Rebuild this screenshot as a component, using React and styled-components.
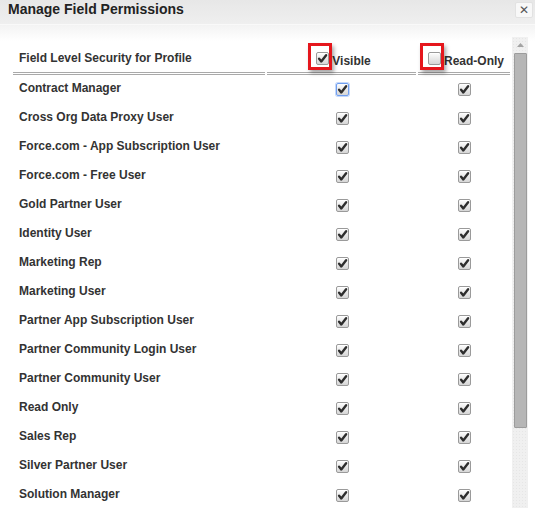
import React from "react";
import styled, { createGlobalStyle } from "styled-components";

const GlobalStyle = createGlobalStyle`
  body {
    margin: 0;
    background: #fff;
  }
`;

const Dialog = styled.div`
  width: 535px;
  height: 508px;
  display: flex;
  flex-direction: column;
  overflow: hidden;
  background: #fff;
  font-family: "Liberation Sans", Arial, sans-serif;
  color: #333;
`;

const TitleBar = styled.div`
  height: 24px;
  flex-shrink: 0;
  display: flex;
  justify-content: space-between;
  align-items: flex-start;
  padding-left: 8px;
  background: linear-gradient(#e7e7e7, #efefef);
  border-bottom: 1px solid #f9f9f9;
`;

const Title = styled.h2`
  margin: 0;
  font-size: 14px;
  line-height: 18px;
  font-weight: bold;
  color: #222;
`;

const CloseButton = styled.button`
  width: 18px;
  height: 16px;
  margin: 2px 2px 0 0;
  padding: 0;
  display: flex;
  align-items: center;
  justify-content: center;
  border: 1px solid #e2e2e2;
  border-radius: 2px;
  background: #f8f8f8;
  color: #555;
  font-family: "DejaVu Sans", sans-serif;
  font-size: 12px;
  font-weight: bold;
  line-height: 1;
`;

const Body = styled.div`
  flex: 1;
  min-height: 0;
  display: flex;
  padding-top: 12px;
  background: linear-gradient(#f3f3f3, #ffffff 16px);
`;

const Scroller = styled.div`
  flex: 1;
  padding: 4px 0 0 11px;
  overflow: hidden;
`;

const Grid = styled.div`
  display: grid;
  grid-template-columns: 252px 149px 92px;
  column-gap: 2px;
  padding: 0 2px;
`;

const HeadCell = styled.div`
  height: 31px;
  box-sizing: content-box;
  border-bottom: 3px double #a9a9a9;
  display: flex;
  align-items: flex-start;
  justify-content: ${(p) => (p.$center ? "center" : "flex-start")};
  font-size: 12px;
  font-weight: bold;
  line-height: 14px;
`;

const HeadLabel = styled.span`
  padding: 10px 0 0 6px;
`;

const HeadCheck = styled.label`
  display: flex;
  align-items: flex-start;
  padding-top: 11px;
`;

const Marked = styled.span`
  position: relative;
  display: flex;
`;

const RedBox = styled.span`
  position: absolute;
  top: -9px;
  left: -4px;
  width: 18px;
  height: 21px;
  border: 3px solid #e5161c;
  box-shadow: 2px 3px 4px rgba(0, 0, 0, 0.35);
  pointer-events: none;
`;

const Cell = styled.div`
  height: 29px;
  display: flex;
  align-items: ${(p) => (p.$check ? "center" : "flex-start")};
  justify-content: ${(p) => (p.$check ? "center" : "flex-start")};
  padding-left: ${(p) => (p.$check ? "0" : "6px")};
  font-size: 12px;
  font-weight: bold;
  line-height: 14px;
`;

const RowLabel = styled.span`
  padding-top: 6px;
  white-space: nowrap;
`;

const Box = styled.span`
  width: 13px;
  height: 13px;
  box-sizing: border-box;
  margin: 0 3px 0 4px;
  display: flex;
  align-items: center;
  justify-content: center;
  border: 1px solid ${(p) => (p.$focus ? "#6f9ef0" : "#9a9a9a")};
  border-radius: 2px;
  background: linear-gradient(#fdfdfd, #d6d6d6);
  box-shadow: ${(p) =>
    p.$focus ? "0 0 0 1px #c4d8fa" : "inset 0 1px 0 #fff"};
`;

const Text = styled.span`
  margin-top: 2px;
`;

const Scrollbar = styled.div`
  width: 16px;
  margin-right: 7px;
  display: flex;
  flex-direction: column;
  align-items: center;
  background-color: #f0f0f0;
  background-image: radial-gradient(#e6e6e6 0.6px, transparent 0.7px);
  background-size: 3px 3px;
`;

const Arrow = styled.div`
  height: 16px;
  display: flex;
  align-items: center;
  justify-content: center;
`;

const Thumb = styled.div`
  width: 13px;
  height: 375px;
  box-sizing: border-box;
  background: #b6b6b6;
  border: 1px solid #9c9c9c;
  border-radius: 1px;
`;

const profiles = [
  "Contract Manager",
  "Cross Org Data Proxy User",
  "Force.com - App Subscription User",
  "Force.com - Free User",
  "Gold Partner User",
  "Identity User",
  "Marketing Rep",
  "Marketing User",
  "Partner App Subscription User",
  "Partner Community Login User",
  "Partner Community User",
  "Read Only",
  "Sales Rep",
  "Silver Partner User",
  "Solution Manager",
];

const CheckBox = ({ checked = true, focus = false }) => (
  <Box $focus={focus}>
    {checked && (
      <svg width="11" height="11" viewBox="0 0 11 11">
        <path
          d="M2.1 5.7 L4.3 8.4 L9.1 2.3"
          fill="none"
          stroke="#2e2e2e"
          strokeWidth="2.4"
          strokeLinecap="round"
          strokeLinejoin="round"
        />
      </svg>
    )}
  </Box>
);

const App = () => {
  return (
    <Dialog>
      <GlobalStyle />
      <TitleBar>
        <Title>Manage Field Permissions</Title>
        <CloseButton>✕</CloseButton>
      </TitleBar>
      <Body>
        <Scroller>
          <Grid>
            <HeadCell>
              <HeadLabel>Field Level Security for Profile</HeadLabel>
            </HeadCell>
            <HeadCell $center>
              <HeadCheck>
                <Marked>
                  <CheckBox />
                  <RedBox />
                </Marked>
                <Text>Visible</Text>
              </HeadCheck>
            </HeadCell>
            <HeadCell $center>
              <HeadCheck>
                <Marked>
                  <CheckBox checked={false} />
                  <RedBox />
                </Marked>
                <Text>Read-Only</Text>
              </HeadCheck>
            </HeadCell>
            {profiles.map((name, i) => (
              <React.Fragment key={name}>
                <Cell>
                  <RowLabel>{name}</RowLabel>
                </Cell>
                <Cell $check>
                  <CheckBox focus={i === 0} />
                </Cell>
                <Cell $check>
                  <CheckBox />
                </Cell>
              </React.Fragment>
            ))}
          </Grid>
        </Scroller>
        <Scrollbar>
          <Arrow>
            <svg width="7" height="4" viewBox="0 0 7 4">
              <path d="M0 4 L3.5 0 L7 4 Z" fill="#a3a3a3" />
            </svg>
          </Arrow>
          <Thumb />
        </Scrollbar>
      </Body>
    </Dialog>
  );
};

export default App;
